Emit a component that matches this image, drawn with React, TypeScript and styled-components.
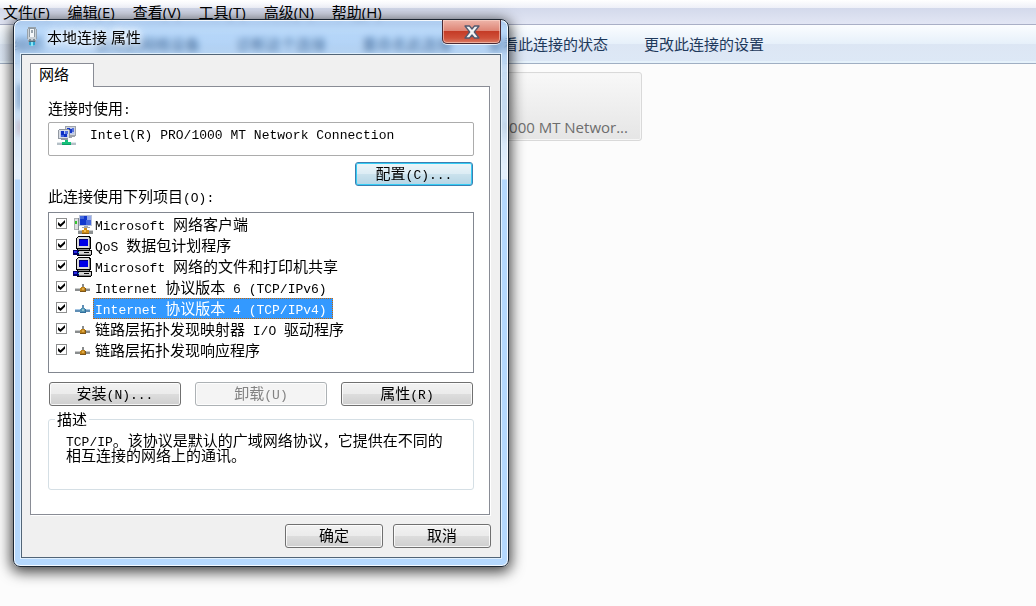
import React from "react";
import styled, { createGlobalStyle, css } from "styled-components";

const UI_FONT = `"Open Sans", "Noto Sans CJK SC", sans-serif`;
const SONG_FONT = `"Noto Sans CJK SC", sans-serif`;
const MONO_FONT = `"Liberation Mono", "Noto Sans CJK SC", monospace`;

const GlobalStyle = createGlobalStyle`
  *, *::before, *::after { box-sizing: border-box; }
  body { margin: 0; background: #fcfcfc; font-family: ${UI_FONT}; font-size: 15px; color: #000; }
  button, input { font: inherit; color: inherit; margin: 0; }
`;

const Explorer = styled.div`
  position: relative;
  min-height: 100vh;
  display: flex;
  flex-direction: column;
  overflow: hidden;
`;

const MenuBar = styled.nav`
  display: flex;
  gap: 18px;
  height: 25px;
  padding: 0 3px 1px;
  border-bottom: 1px solid #a9afc6;
  background: linear-gradient(#ffffff 0, #eef0f8 8px, #d3d9eb 8px, #e2e6f4 24px);
`;

const MenuItem = styled.button`
  border: 0;
  padding: 0;
  background: none;
  line-height: 22px;
  white-space: nowrap;
`;

const Toolbar = styled.div`
  display: flex;
  align-items: center;
  gap: 36px;
  height: 39px;
  padding-left: 14px;
  border-bottom: 1px solid #a0afc3;
  background: linear-gradient(#fbfdff 0, #e6f0fa 19px, #dce6f4 19px, #dde8f6 36px, #e6f2fb 36px);
`;

const ToolbarItem = styled.button`
  flex: none;
  min-width: 45px;
  border: 0;
  padding: 0;
  background: none;
  color: #1e395b;
  line-height: 22px;
  text-align: left;
  white-space: nowrap;
`;

const Connections = styled.main`
  display: flex;
  gap: 12px;
  padding: 8px 12px;
`;

const ConnectionCard = styled.div<{ $active?: boolean }>`
  display: flex;
  align-items: flex-end;
  justify-content: space-between;
  flex: none;
  width: 309px;
  height: 69px;
  padding: 0 13px 1px 4px;
  border: 1px solid transparent;
  border-radius: 3px;
  color: #6d6d6d;
  font-size: 15px;
  line-height: 24px;
  white-space: nowrap;
  ${(p) =>
    p.$active &&
    css`
      border-color: #d9d9d9;
      background: linear-gradient(#f8f8f8, #e5e5e5);
      box-shadow: inset 0 0 0 1px #f6f6f6;
    `}
`;

const Dialog = styled.section`
  position: absolute;
  left: 13px;
  top: 19px;
  width: 496px;
  padding: 0 7px 8px;
  border: 1px solid #1d2733;
  border-radius: 8px 8px 7px 7px;
  background: linear-gradient(
    rgba(120, 180, 240, 0.45) 0,
    rgba(110, 175, 245, 0.45) 16px,
    rgba(140, 190, 240, 0.45) 36px,
    rgba(180, 210, 240, 0.7) 90px,
    rgba(225, 238, 252, 0.9) 150px,
    #e3effc 159px,
    #b5d8fd 160px
  );
  backdrop-filter: blur(3px);
  box-shadow: inset 0 0 0 1px rgba(255, 255, 255, 0.85), 0 3px 14px 2px rgba(0, 0, 0, 0.75);
`;

const TitleBar = styled.header`
  display: flex;
  align-items: center;
  gap: 7px;
  height: 34px;
  padding-left: 3px;
`;

const Title = styled.h1`
  flex: 1;
  margin: 0;
  font-size: 15px;
  font-weight: 400;
  line-height: 20px;
  text-shadow: 0 0 6px #fff, 0 0 10px #fff, 0 0 14px rgba(255, 255, 255, 0.8);
`;

const CloseButton = styled.button`
  align-self: flex-start;
  display: flex;
  align-items: center;
  justify-content: center;
  width: 59px;
  height: 24px;
  padding: 0;
  border: 1px solid #4c2a33;
  border-top: 0;
  border-radius: 0 0 5px 5px;
  background: linear-gradient(#eeb5aa 0, #dd8474 11px, #c43a25 11px, #cf5039 18px, #dc8670 24px);
  box-shadow: inset 0 0 0 1px rgba(255, 220, 210, 0.55), 0 1px 0 rgba(255, 255, 255, 0.8);
`;

const Client = styled.div`
  padding: 8px 10px 9px 8px;
  border: 1px solid #526577;
  background: #f0f0f0;
  box-shadow: 0 0 0 1px rgba(235, 246, 255, 0.8);
  font-family: ${SONG_FONT};
`;

const Tab = styled.button`
  position: relative;
  display: block;
  width: 64px;
  height: 24px;
  margin-bottom: -1px;
  padding: 0 8px 4px;
  border: 1px solid #898c95;
  border-bottom: 0;
  background: #fff;
  line-height: 19px;
  text-align: left;
`;

const Panel = styled.div`
  display: flex;
  flex-direction: column;
  padding: 11px 15px 24px 17px;
  border: 1px solid #898c95;
  background: #fff;
  box-shadow: 1px 1px 0 #fff;
`;

const FieldLabel = styled.label`
  margin-bottom: 5px;
  line-height: 19px;
`;

const ListLabel = styled.div`
  margin-bottom: 6px;
  line-height: 20px;
`;

const Latin = styled.span`
  font-family: ${MONO_FONT};
  font-size: 13px;
  line-height: 0;
`;

const DeviceBox = styled.div`
  display: flex;
  align-items: flex-start;
  gap: 13px;
  height: 34px;
  padding: 2px 8px;
  border: 1px solid #acacac;
  border-radius: 2px;
`;

const DeviceInput = styled.input`
  flex: 1;
  min-width: 0;
  height: 20px;
  padding: 0;
  border: 0;
  outline: 0;
  background: none;
  font-family: ${MONO_FONT};
  font-size: 13px;
`;

const PushButton = styled.button<{ $size?: "small"; $focused?: boolean }>`
  flex: ${(p) => (p.$size ? "0 0 98px" : "1 1 0")};
  height: 24px;
  padding: 0 0 2px;
  border: 1px solid #707070;
  border-radius: 3px;
  background: linear-gradient(#f2f2f2 0, #ebebeb 11px, #dddddd 11px, #cfcfcf 22px);
  box-shadow: inset 0 0 0 1px rgba(255, 255, 255, 0.8);
  line-height: 20px;
  &:disabled {
    border-color: #adb2b5;
    background: #f4f4f4;
    color: #838383;
  }
  ${(p) =>
    p.$focused &&
    css`
      flex: 0 0 118px;
      border-color: #3c7fb1;
      background: linear-gradient(#edf5f9 0, #dcecf4 11px, #cbe2ed 11px, #b5d5e5 22px);
      box-shadow: inset 0 0 0 1px #35cdf5;
    `}
`;

const ButtonRow = styled.div<{ $gap: number; $above: number }>`
  display: flex;
  justify-content: flex-end;
  gap: ${(p) => p.$gap}px;
  margin-top: ${(p) => p.$above}px;
  padding: 0 1px;
`;

const DialogButtons = styled(ButtonRow)`
  margin-right: -1px;
  padding: 0;
`;

const ItemList = styled.ul`
  min-height: 161px;
  margin: 0;
  padding: 1px 7px;
  border: 1px solid #828790;
  list-style: none;
`;

const ItemRow = styled.label`
  display: flex;
  align-items: center;
  height: 21px;
`;

const CheckBox = styled.input`
  appearance: none;
  position: relative;
  flex: none;
  width: 11px;
  height: 11px;
  margin-right: 6px;
  margin-bottom: 2px;
  border: 1px solid #8e8f8f;
  background: #fff;
  &:checked::before {
    content: "";
    position: absolute;
    inset: 1px;
    background: #000;
    clip-path: polygon(0 30%, 36% 62%, 100% 0, 100% 38%, 36% 100%, 0 70%);
  }
`;

const IconCell = styled.span`
  display: flex;
  align-items: center;
  justify-content: center;
  flex: none;
  width: 20px;
  height: 20px;
`;

const ItemText = styled.span<{ $selected?: boolean }>`
  height: 21px;
  padding: 0 5px 0 1px;
  border: 1px solid transparent;
  line-height: 18px;
  white-space: nowrap;
  ${(p) =>
    p.$selected &&
    css`
      border: 1px dotted #cc6600;
      background: #3399ff;
      color: #fff;
    `}
`;

const Group = styled.fieldset`
  min-width: 0;
  margin: 4px 0 0;
  padding: 4px 22px 27px 17px;
  border: 1px solid #d5dfe5;
  border-radius: 3px;
`;

const Legend = styled.legend`
  margin-left: -11px;
  padding: 0 2px;
  line-height: 18px;
`;

const Description = styled.p`
  margin: 0;
  line-height: 15px;
`;

/** Sets Latin runs in the half-width face and leaves Chinese in the full-width one. */
function Mixed({ children }: { children: string }) {
  const runs = children.split(/([\x20-\x7e]+)/).filter(Boolean);
  return (
    <>
      {runs.map((run, i) =>
        /^[\x20-\x7e]/.test(run) ? <Latin key={i}>{run}</Latin> : <React.Fragment key={i}>{run}</React.Fragment>
      )}
    </>
  );
}

function PlugIcon() {
  return (
    <svg width="16" height="22" viewBox="0 0 16 22" shapeRendering="crispEdges" aria-hidden="true">
      <path d="M4 1h8v15H4z" fill="#98a3ac" />
      <path d="M3 3h10v10H3z" fill="#98a3ac" />
      <path d="M4 3h8v11H4z" fill="#c9d0d6" />
      <path d="M5 2h6v9H5z" fill="#8d99a3" />
      <path d="M6 3h4v8H6z" fill="#f4f7f9" />
      <path d="M7 4h2v3H7z" fill="#9aa5ae" />
      <path d="M5 13h2v2H5zM9 13h2v2H9z" fill="#7d8b96" />
      <path d="M5 15h6v1H5z" fill="#4a6a7c" />
      <path d="M5 16h2v3H5zM9 16h2v3H9z" fill="#2ba5cf" />
      <path d="M7 16h2v4H7z" fill="#8be4f6" />
      <path d="M6 19h1v1H6zM9 19h1v1H9z" fill="#5cc8e4" />
    </svg>
  );
}

function AdapterIcon() {
  return (
    <svg width="20" height="22" viewBox="0 0 20 22" shapeRendering="crispEdges" aria-hidden="true">
      <path d="M8 1h11v10h-1v1h-3v1h-4V9H8z" fill="#9ea3ab" />
      <path d="M9 2h9v8H9z" fill="#cfd4de" />
      <path d="M10 3h7v6h-7z" fill="#b6c4ef" />
      <path d="M10 3h3v2h-3zM13 4h2v4h-2z" fill="#1537c8" />
      <path d="M15 3h2v4h-2z" fill="#5672dc" />
      <path d="M2 4h10v1h1v8h-2v2H4v-1H1V5h1z" fill="#9298a1" />
      <path d="M2 5h10v8H2z" fill="#d9dde5" />
      <path d="M3 6h8v6H3z" fill="#b9c8f2" />
      <path d="M4 6h3v4H4zM7 9h3v3H7z" fill="#0d2fc5" />
      <path d="M8 6h3v3H8z" fill="#506fdf" />
      <path d="M4 10h3v2H4z" fill="#4261d8" />
      <path d="M0 17h19v3H0z" fill="#b4bfc6" />
      <path d="M0 17h19v1H0z" fill="#dfe6ea" />
      <path d="M8 15h3v2h3v3H5v-3h3z" fill="#16c07a" />
      <path d="M5 19h9v1H5z" fill="#0e9f65" />
    </svg>
  );
}

function ClientIcon() {
  return (
    <svg width="20" height="20" viewBox="0 0 20 20" shapeRendering="crispEdges" aria-hidden="true">
      <path d="M1 3h5v12H1z" fill="#a9adb2" />
      <path d="M2 4h3v10H2z" fill="#dcdfe0" />
      <path d="M2 6h2v3H2z" fill="#35c52d" />
      <path d="M5 3h1v12H5z" fill="#858b93" />
      <path d="M6 0h13v11H6z" fill="#b9c3db" />
      <path d="M7 1h11v9H7z" fill="#1238cd" />
      <path d="M7 1h4v3H7zM13 5h5v5h-5z" fill="#4468dc" />
      <path d="M14 1h4v4h-4z" fill="#93a9ee" />
      <path d="M11 11h4v2h-4zM9 12h8v1H9z" fill="#a0a6af" />
      <path d="M5 16h15v3H5z" fill="#8b8f90" />
      <path d="M5 15h15v1H5z" fill="#c9cbcc" />
      <path d="M11 13h3v2h2v4H9v-4h2z" fill="#cf8d18" />
      <path d="M11 15h2v2h-2z" fill="#f6bf4c" />
      <path d="M9 18h7v1H9z" fill="#8c5a10" />
    </svg>
  );
}

function ComputerIcon() {
  return (
    <svg width="20" height="20" viewBox="0 0 20 20" shapeRendering="crispEdges" aria-hidden="true">
      <path d="M5 0h12v1h1v12h-1v1h2v5h-1v1H4v-1H3v-5h1v-1H3V2h1V1h1z" fill="#000" />
      <path d="M5 1h11v11H4V2h1z" fill="#dcdcdc" />
      <path d="M16 2h1v10h-1z" fill="#858585" />
      <path d="M6 3h9v7H6z" fill="#000080" />
      <path d="M7 4h8v6H7z" fill="#0000e8" />
      <path d="M5 13h11v1H5z" fill="#8a8a8a" />
      <path d="M4 15h14v3H4z" fill="#d4d4d4" />
      <path d="M4 18h14v1H4z" fill="#858585" />
      <path d="M11 16h5v1h-5z" fill="#000" />
      <path d="M0 14h5v1h1v4H0z" fill="#00006a" />
      <path d="M1 15h3v2H1z" fill="#2a2ae8" />
      <path d="M5 16h1v1H5z" fill="#19c4d4" />
    </svg>
  );
}

function ProtocolIcon({ selected }: { selected?: boolean }) {
  const [pipe, light, node, glow, edge] = selected
    ? ["#5f8eb5", "#a7c7e4", "#4f93b8", "#8fc2cc", "#326f9b"]
    : ["#898c8d", "#c8caca", "#bd821b", "#dfa843", "#7d5518"];
  return (
    <svg width="16" height="10" viewBox="0 0 16 10" shapeRendering="crispEdges" aria-hidden="true">
      <path d="M0 5h15v3H0z" fill={pipe} />
      <path d="M0 5h15v1H0z" fill={light} />
      <path d="M7 1h2v3H7z" fill={pipe} />
      <path d="M6 4h4v1h1v4H5V5h1z" fill={node} />
      <path d="M7 5h2v2H7z" fill={glow} />
      <path d="M5 8h6v1H5zM10 5h1v3h-1z" fill={edge} />
    </svg>
  );
}

function CloseIcon() {
  return (
    <svg width="18" height="16" viewBox="0 0 18 16" aria-hidden="true">
      <path
        d="M2 2h4.500L9 5l2.500-3H16l-4.700 6L16 14h-4.500L9 11l-2.500 3H2l4.700-6z"
        fill="#f4f4f4"
        stroke="#525a70"
        strokeWidth="1.300"
        strokeLinejoin="round"
      />
    </svg>
  );
}

function BackgroundAdapterIcon() {
  return (
    <svg width="44" height="60" viewBox="0 0 44 60" aria-hidden="true">
      <path d="M0 6h30v24H0z" fill="#4c6a94" />
      <path d="M0 42h12v14H0z" fill="#d0605a" />
    </svg>
  );
}

const menus = ["文件(F)", "编辑(E)", "查看(V)", "工具(T)", "高级(N)", "帮助(H)"];
const commands = ["组织", "禁用此网络设备", "诊断这个连接", "重命名此连接", "查看此连接的状态", "更改此连接的设置"];

type IconKind = "client" | "computer" | "protocol";
const items: { icon: IconKind; text: string; selected?: boolean }[] = [
  { icon: "client", text: "Microsoft 网络客户端" },
  { icon: "computer", text: "QoS 数据包计划程序" },
  { icon: "computer", text: "Microsoft 网络的文件和打印机共享" },
  { icon: "protocol", text: "Internet 协议版本 6 (TCP/IPv6)" },
  { icon: "protocol", text: "Internet 协议版本 4 (TCP/IPv4)", selected: true },
  { icon: "protocol", text: "链路层拓扑发现映射器 I/O 驱动程序" },
  { icon: "protocol", text: "链路层拓扑发现响应程序" },
];

function ItemIcon({ kind, selected }: { kind: IconKind; selected?: boolean }) {
  if (kind === "client") return <ClientIcon />;
  if (kind === "computer") return <ComputerIcon />;
  return <ProtocolIcon selected={selected} />;
}

export default function App() {
  return (
    <Explorer>
      <GlobalStyle />
      <MenuBar>
        {menus.map((m) => (
          <MenuItem key={m}>{m}</MenuItem>
        ))}
      </MenuBar>
      <Toolbar>
        {commands.map((c) => (
          <ToolbarItem key={c}>{c}</ToolbarItem>
        ))}
      </Toolbar>
      <Connections>
        <ConnectionCard>
          <BackgroundAdapterIcon />
        </ConnectionCard>
        <ConnectionCard $active>
          <span />
          <span>Intel(R) PRO/1000 MT Networ...</span>
        </ConnectionCard>
      </Connections>

      <Dialog role="dialog" aria-labelledby="dialog-title">
        <TitleBar>
          <PlugIcon />
          <Title id="dialog-title">本地连接 属性</Title>
          <CloseButton aria-label="关闭">
            <CloseIcon />
          </CloseButton>
        </TitleBar>
        <Client>
          <Tab role="tab" aria-selected="true">
            网络
          </Tab>
          <Panel role="tabpanel">
            <FieldLabel htmlFor="device">
              <Mixed>连接时使用:</Mixed>
            </FieldLabel>
            <DeviceBox>
              <AdapterIcon />
              <DeviceInput id="device" readOnly value="Intel(R) PRO/1000 MT Network Connection" />
            </DeviceBox>
            <ButtonRow $gap={14} $above={6}>
              <PushButton $focused>
                <Mixed>配置(C)...</Mixed>
              </PushButton>
            </ButtonRow>
            <ListLabel id="items-label">
              <Mixed>此连接使用下列项目(O):</Mixed>
            </ListLabel>
            <ItemList aria-labelledby="items-label">
              {items.map((item) => (
                <li key={item.text}>
                  <ItemRow>
                    <CheckBox type="checkbox" defaultChecked />
                    <IconCell>
                      <ItemIcon kind={item.icon} selected={item.selected} />
                    </IconCell>
                    <ItemText $selected={item.selected}>
                      <Mixed>{item.text}</Mixed>
                    </ItemText>
                  </ItemRow>
                </li>
              ))}
            </ItemList>
            <ButtonRow $gap={14} $above={9}>
              <PushButton>
                <Mixed>安装(N)...</Mixed>
              </PushButton>
              <PushButton disabled>
                <Mixed>卸载(U)</Mixed>
              </PushButton>
              <PushButton>
                <Mixed>属性(R)</Mixed>
              </PushButton>
            </ButtonRow>
            <Group>
              <Legend>描述</Legend>
              <Description>
                <Mixed>TCP/IP。该协议是默认的广域网络协议，它提供在不同的相互连接的网络上的通讯。</Mixed>
              </Description>
            </Group>
          </Panel>
          <DialogButtons $gap={10} $above={9}>
            <PushButton $size="small">确定</PushButton>
            <PushButton $size="small">取消</PushButton>
          </DialogButtons>
        </Client>
      </Dialog>
    </Explorer>
  );
}
